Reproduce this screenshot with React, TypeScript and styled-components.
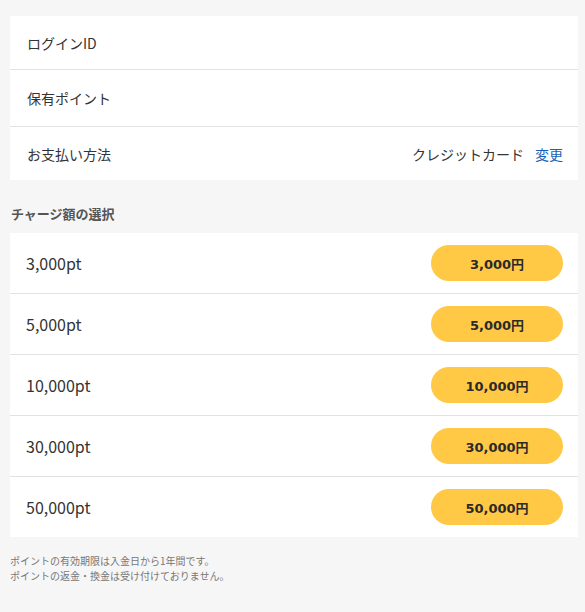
import React from "react";
import styled, { createGlobalStyle } from "styled-components";

const GlobalStyle = createGlobalStyle`
  html, body {
    margin: 0;
    padding: 0;
    background: #f6f6f6;
  }
  body {
    font-family: "Noto Sans CJK JP", "Noto Sans", sans-serif;
    color: #333;
  }
`;

const Page = styled.div`
  width: 568px;
  padding: 16px 0 30px 10px;
  display: flex;
  flex-direction: column;
`;

const Card = styled.div`
  background: #fff;
  display: flex;
  flex-direction: column;
`;

// height here is content height; the divider line sits on top of it
const InfoRow = styled.div<{ $h: number }>`
  height: ${(p) => p.$h}px;
  display: flex;
  align-items: center;
  justify-content: space-between;
  padding: 0 15px 0 17px;
  font-size: 14px;
  line-height: 18px;
  color: #333;
  & + & {
    border-top: 1px solid #e2e2e2;
  }
`;

const Value = styled.div`
  display: flex;
  align-items: center;
  gap: 11px;
`;

const Link = styled.a`
  color: #1961b6;
  text-decoration: none;
  cursor: pointer;
`;

const SectionTitle = styled.h2`
  margin: 24px 0 9px 1px;
  font-size: 13px;
  font-weight: bold;
  color: #555;
  line-height: 20px;
`;

const ChargeRow = styled.div`
  height: 60px;
  display: flex;
  align-items: center;
  justify-content: space-between;
  padding: 0 15px 0 16px;
  & + & {
    border-top: 1px solid #e2e2e2;
  }
`;

const Points = styled.span`
  font-size: 16px;
  line-height: 20px;
  color: #333;
`;

const PriceButton = styled.button`
  width: 132px;
  height: 36px;
  border: none;
  border-radius: 18px;
  background: #ffc845;
  color: #2a2a2a;
  font-family: "DejaVu Sans", "Noto Sans CJK JP", sans-serif;
  font-weight: bold;
  font-size: 13px;
  cursor: pointer;
`;

const Notes = styled.p`
  margin: 16px 0 0 0;
  font-size: 10px;
  line-height: 15px;
  color: #777;
`;

const amounts = ["3,000", "5,000", "10,000", "30,000", "50,000"];

export default function App() {
  return (
    <>
      <GlobalStyle />
      <Page>
        <Card>
          <InfoRow $h={53}>ログインID</InfoRow>
          <InfoRow $h={56}>保有ポイント</InfoRow>
          <InfoRow $h={53}>
            お支払い方法
            <Value>
              クレジットカード
              <Link>変更</Link>
            </Value>
          </InfoRow>
        </Card>
        <SectionTitle>チャージ額の選択</SectionTitle>
        <Card>
          {amounts.map((a) => (
            <ChargeRow key={a}>
              <Points>{a}pt</Points>
              <PriceButton>{a}円</PriceButton>
            </ChargeRow>
          ))}
        </Card>
        <Notes>
          ポイントの有効期限は入金日から1年間です。
          <br />
          ポイントの返金・換金は受け付けておりません。
        </Notes>
      </Page>
    </>
  );
}
